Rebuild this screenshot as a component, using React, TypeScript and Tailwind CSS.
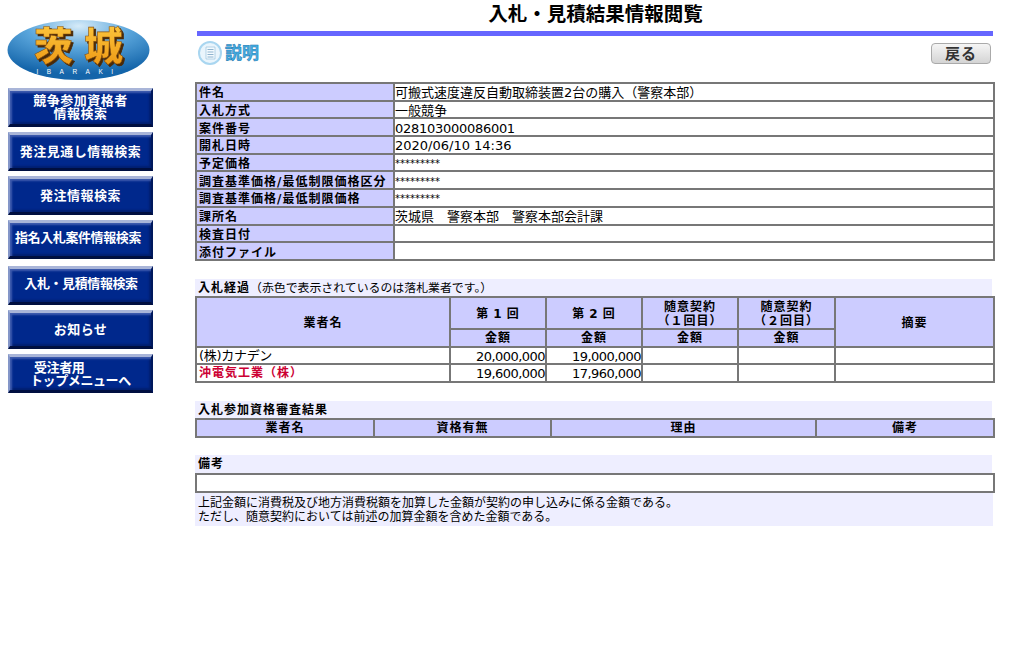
const font = { fontFamily: '"DejaVu Sans", "Noto Sans CJK JP", sans-serif' };

const menuItems = [
  { lines: ["競争参加資格者", "情報検索"], mt: "mt-0", pad: "items-center pb-[2px] tracking-[0.5px]" },
  { lines: ["発注見通し情報検索"], mt: "mt-[5px]", pad: "items-center pb-[1px] tracking-[0.5px]" },
  { lines: ["発注情報検索"], mt: "mt-[5px]", pad: "items-center pb-[1px] tracking-[0.5px]" },
  { lines: ["指名入札案件情報検索"], mt: "mt-[5px]", pad: "items-center pb-[4px] pr-[5px] tracking-[-0.4px]" },
  { lines: ["入札・見積情報検索"], mt: "mt-[7px]", pad: "items-center pb-[5px] pl-[1px] tracking-[-0.4px]" },
  { lines: ["お知らせ"], mt: "mt-[5px]", pad: "items-center tracking-[0.5px]" },
  { lines: ["受注者用", "トップメニューへ"], mt: "mt-[5px]", pad: "items-start pl-[24px] tracking-[-0.4px]" },
];

const infoRows = [
  ["件名", "可搬式速度違反自動取締装置2台の購入（警察本部）"],
  ["入札方式", "一般競争"],
  ["案件番号", "028103000086001"],
  ["開札日時", "2020/06/10 14:36"],
  ["予定価格", "*********"],
  ["調査基準価格/最低制限価格区分", "*********"],
  ["調査基準価格/最低制限価格", "*********"],
  ["課所名", "茨城県　警察本部　警察本部会計課"],
  ["検査日付", ""],
  ["添付ファイル", ""],
];

const cell = "border-2 border-[#777777] p-0 align-middle";
const head = `${cell} bg-[#ccccff] text-[12px] leading-[14px] font-bold tracking-[1px] text-center text-black`;
const amount = `${cell} text-right tracking-[-0.55px] leading-[13px] pt-[1px]`;

function Logo() {
  return (
    <svg width="144" height="62" viewBox="0 0 144 62" className="ml-[7px] overflow-visible">
      <defs>
        <radialGradient id="sky" cx="0.5" cy="0.1" r="0.8">
          <stop offset="0" stopColor="#d6ebf8" />
          <stop offset="0.45" stopColor="#5aa6dc" />
          <stop offset="1" stopColor="#1465aa" />
        </radialGradient>
        <linearGradient id="gold" x1="0" y1="0" x2="0" y2="1">
          <stop offset="0" stopColor="#ffcf45" />
          <stop offset="1" stopColor="#ec9410" />
        </linearGradient>
      </defs>
      <ellipse cx="71.5" cy="31" rx="71" ry="30" fill="url(#sky)" />
      <text
        x="77"
        y="41"
        textAnchor="middle"
        fontSize="39"
        fontWeight="900"
        letterSpacing="11"
        fill="url(#gold)"
        stroke="#8a5210"
        strokeWidth="0.6"
        className="drop-shadow-[2px_2px_0_#4a2a08]"
        style={{ fontFamily: '"Noto Sans CJK JP", sans-serif' }}
      >
        茨城
      </text>
      <text x="72" y="55" textAnchor="middle" fontSize="6.5" fill="#ffffff" letterSpacing="8.5" style={{ fontFamily: '"Liberation Sans", sans-serif' }}>
        IBARAKI
      </text>
    </svg>
  );
}

function MenuButton({ lines, mt, pad }: { lines: string[]; mt: string; pad: string }) {
  return (
    <div className={`${mt} ${pad} h-[39px] w-[145px] flex flex-col justify-center border-t-[3px] border-l-[2px] border-r-[2px] border-b-[3px] border-t-[#a9b5d8] border-l-[#8496c8] border-r-[#00185c] border-b-[#000f40] bg-[#00288c] shadow-[inset_2px_2px_2px_#3f5cae,inset_-2px_-2px_2px_#001f70] text-white text-[13px] leading-[13px] font-bold whitespace-nowrap`}>
      {lines.map((l) => (
        <span key={l} className={l.startsWith("トップ") ? "-ml-[4px]" : ""}>{l}</span>
      ))}
    </div>
  );
}

function SectionTitle({ children, className = "" }: { children: React.ReactNode; className?: string }) {
  return (
    <div className={`w-[797px] bg-[#eeeeff] pl-[3px] text-[12px] font-bold tracking-[1px] text-black ${className}`}>
      {children}
    </div>
  );
}

export default function App() {
  return (
    <div className="flex w-[1021px] h-[669px] bg-white text-black overflow-hidden" style={font}>
      {/* Left menu */}
      <div className="w-[195px] shrink-0 pt-[19px]">
        <Logo />
        <div className="mt-[7px] ml-[8px]">
          {menuItems.map((m) => (
            <MenuButton key={m.lines[0]} lines={m.lines} mt={m.mt} pad={m.pad} />
          ))}
        </div>
      </div>

      {/* Main */}
      <div className="w-[801px]">
        <h1 className="h-[31px] pt-[2px] text-center text-[19.5px] leading-[25px] font-bold">入札・見積結果情報閲覧</h1>
        <div className="ml-[2px] w-[796px] h-[5px] bg-[#6666ff]" />

        <div className="flex items-start justify-between h-[46px] pr-[5px]">
          <div className="flex items-center mt-[5px] ml-[3px]">
            <svg width="24" height="24" viewBox="0 0 24 24">
              <circle cx="12" cy="12" r="11" fill="#eaf5fc" stroke="#a9d6f0" strokeWidth="2" />
              <path d="M8 6h9v12H8z" fill="#f4fafe" stroke="#9cc3dc" strokeWidth="0.7" />
              <path d="M9.5 8.5h6M9.5 11h6M9.5 13.5h6M9.5 16h6" stroke="#8fb4cf" strokeWidth="1" />
            </svg>
            <span className="ml-[3px] text-[17px] leading-[24px] font-bold text-[#48b0e4] [-webkit-text-stroke:0.5px_#1a75b0]">説明</span>
          </div>
          <div className="mt-[7px] w-[60px] h-[21px] rounded-[4px] border border-[#aaaaaa] bg-gradient-to-b from-[#f5f5f5] to-[#d4d4d4] text-center text-[15px] tracking-[1px] leading-[21px] font-bold text-[#333333]">
            戻る
          </div>
        </div>

        <table className="table-fixed border-collapse w-[800px] text-[13px]">
          <colgroup>
            <col className="w-[198px]" />
            <col />
          </colgroup>
          <tbody>
            {infoRows.map(([k, v]) => (
              <tr key={k} className="h-[17.7px]">
                <td className={`${cell} bg-[#ccccff] text-[12px] leading-[12px] pt-[3px] font-bold tracking-[1px] pl-[2px] whitespace-nowrap`}>{k}</td>
                <td className={`${cell} leading-[13px] pt-[2px] ${v.startsWith("*") ? "text-[10px]" : v.startsWith("0") ? "tracking-[-0.28px]" : ""}`}>{v}</td>
              </tr>
            ))}
          </tbody>
        </table>

        <SectionTitle className="mt-[18px] h-[17px] leading-[19px]">
          入札経過<span className="font-normal text-[11.9px] tracking-normal">（赤色で表示されているのは落札業者です。）</span>
        </SectionTitle>
        <table className="table-fixed border-collapse w-[800px] text-[13px] leading-[14px]">
          <colgroup>
            <col className="w-[254px]" />
            <col className="w-[96px]" />
            <col className="w-[96px]" />
            <col className="w-[96px]" />
            <col className="w-[97px]" />
            <col />
          </colgroup>
          <tbody>
            <tr className="h-[31px]">
              <td rowSpan={2} className={`${head} pt-[2px]`}>業者名</td>
              <td className={`${head} pt-[2px] [word-spacing:-1px]`}>第 1 回</td>
              <td className={`${head} pt-[2px] [word-spacing:-1px]`}>第 2 回</td>
              <td className={`${head} pt-[2px] leading-[13px]`}>随意契約<br />（１回目）</td>
              <td className={`${head} pt-[2px] leading-[13px]`}>随意契約<br />（２回目）</td>
              <td rowSpan={2} className={`${head} pt-[2px]`}>摘要</td>
            </tr>
            <tr className="h-[18px]">
              <td className={`${head} pt-[1px] leading-[13px]`}>金額</td>
              <td className={`${head} pt-[1px] leading-[13px]`}>金額</td>
              <td className={`${head} pt-[1px] leading-[13px]`}>金額</td>
              <td className={`${head} pt-[1px] leading-[13px]`}>金額</td>
            </tr>
            <tr className="h-[17.5px]">
              <td className={`${cell} pl-[2px] tracking-[-0.3px] leading-[13px]`}>(株)カナデン</td>
              <td className={amount}>20,000,000</td>
              <td className={amount}>19,000,000</td>
              <td className={cell} />
              <td className={cell} />
              <td className={cell} />
            </tr>
            <tr className="h-[17.5px]">
              <td className={`${cell} pl-[2px] pt-[1px] leading-[13px] text-[12px] font-bold tracking-[1px] text-[#cc0033]`}>沖電気工業（株）</td>
              <td className={amount}>19,600,000</td>
              <td className={amount}>17,960,000</td>
              <td className={cell} />
              <td className={cell} />
              <td className={cell} />
            </tr>
          </tbody>
        </table>

        <SectionTitle className="mt-[18px] h-[17px] leading-[18px]">入札参加資格審査結果</SectionTitle>
        <table className="table-fixed border-collapse w-[800px]">
          <colgroup>
            <col className="w-[178px]" />
            <col className="w-[177px]" />
            <col className="w-[265px]" />
            <col />
          </colgroup>
          <tbody>
            <tr className="h-[18px]">
              <td className={`${head} pt-[1px] leading-[13px]`}>業者名</td>
              <td className={`${head} pt-[1px] leading-[13px]`}>資格有無</td>
              <td className={`${head} pt-[1px] leading-[13px]`}>理由</td>
              <td className={`${head} pt-[1px] leading-[13px]`}>備考</td>
            </tr>
          </tbody>
        </table>

        <SectionTitle className="mt-[17px] h-[18px] leading-[18px]">備考</SectionTitle>
        <div className="w-[800px] h-[20px] border-2 border-[#777777]" />
        <div className="w-[798px] h-[33px] bg-[#eeeeff] pt-[3px] pl-[3px] text-[12px] leading-[14px]">
          上記金額に消費税及び地方消費税額を加算した金額が契約の申し込みに係る金額である。
          <br />
          ただし、随意契約においては前述の加算金額を含めた金額である。
        </div>
      </div>
    </div>
  );
}
